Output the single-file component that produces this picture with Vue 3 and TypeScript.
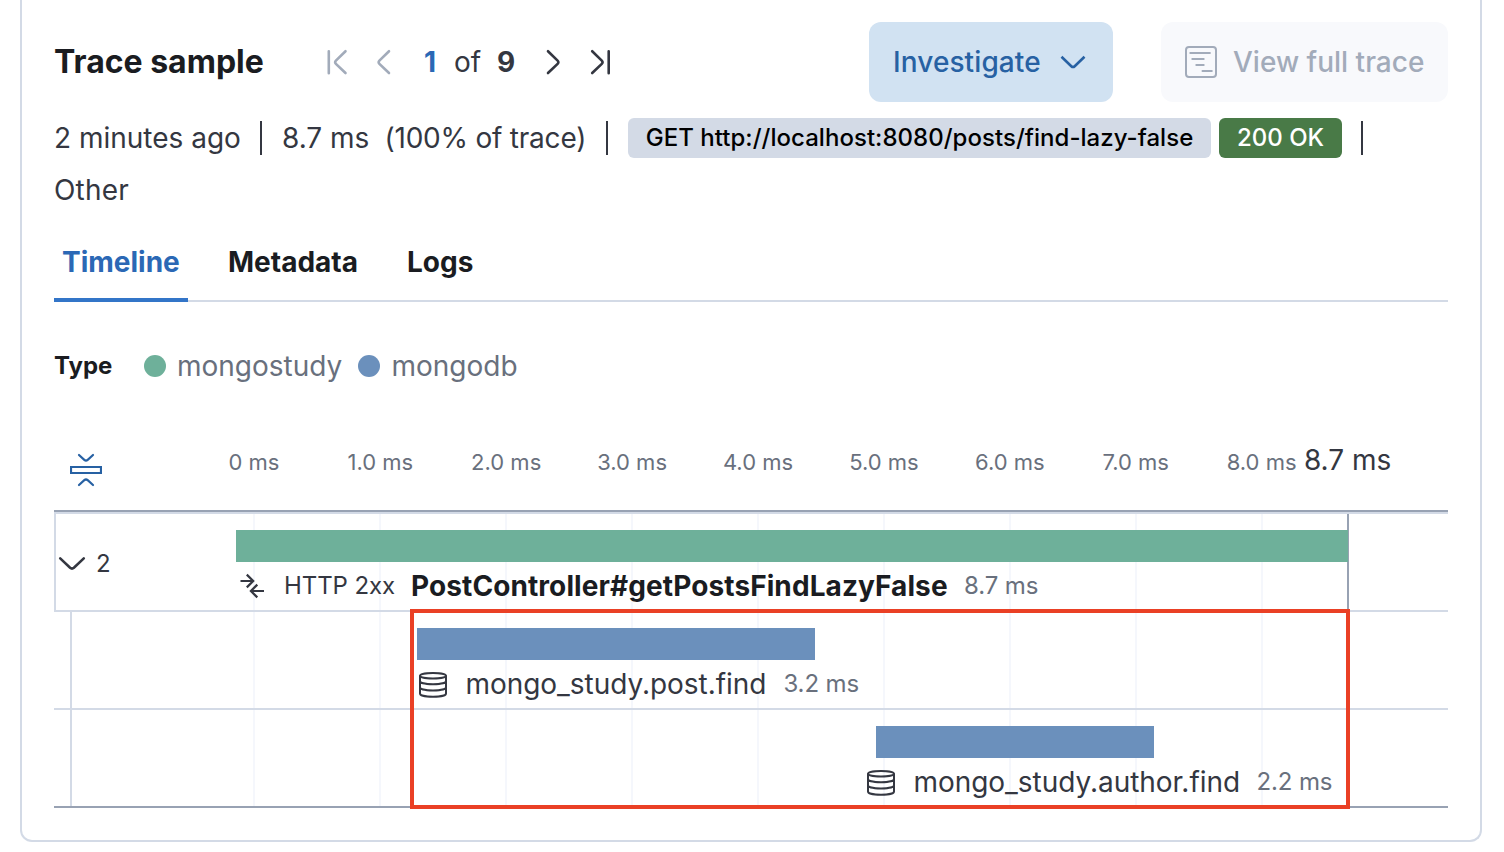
<script setup lang="ts">
interface Tick { label: string; x: number }
interface Span { id: number; name: string; duration: string; start: number; width: number; labelStart: number }

const ticks: Tick[] = Array.from({ length: 9 }, (_, i) => ({
  label: i === 0 ? '0 ms' : `${i}.0 ms`,
  x: i === 0 ? 200 : 200.4 + i * 125.9,
}))

const spans: Span[] = [
  { id: 1, name: 'mongo_study.post.find', duration: '3.2 ms', start: 363, width: 398, labelStart: 363 },
  { id: 2, name: 'mongo_study.author.find', duration: '2.2 ms', start: 822, width: 278, labelStart: 811 },
]
</script>

<template>
  <main class="panel">
    <header class="head">
      <h2 class="title">Trace sample</h2>
      <nav class="pager">
        <svg class="pg off" width="32" height="32" viewBox="0 0 32 32"><path d="M6.8 5.2v22M23.5 5.2l-9.6 9.4q-1.6 1.6 0 3.2l9.6 9.2" /></svg>
        <svg class="pg off second" width="32" height="32" viewBox="0 0 32 32"><path d="M20 5.2l-9.6 9.4q-1.6 1.6 0 3.2l9.6 9.2" /></svg>
        <b class="cur">1</b><span class="of">of</span><b class="total">9</b>
        <svg class="pg third" width="32" height="32" viewBox="0 0 32 32"><path d="M10 5.2l9.6 9.4q1.6 1.6 0 3.2l-9.6 9.2" /></svg>
        <svg class="pg fourth" width="32" height="32" viewBox="0 0 32 32"><path d="M7.2 5.2l9.6 9.4q1.6 1.6 0 3.2l-9.6 9.2M23.7 5.2v22" /></svg>
      </nav>
      <button class="btn primary">
        <span class="t-inv">Investigate</span>
        <svg width="32" height="32" viewBox="0 0 32 32"><path d="M4.5 10.8l9.8 9.4q1.7 1.6 3.4 0l9.8-9.4" /></svg>
      </button>
      <button class="btn disabled">
        <svg width="32" height="32" viewBox="0 0 32 32"><path d="M4 1h24a3 3 0 0 1 3 3v24a3 3 0 0 1-3 3H4a3 3 0 0 1-3-3V4a3 3 0 0 1 3-3zM5.3 7h19.6M7.3 13h11.4M11.3 19h7.4M17.5 25h9.3" /></svg>
        <span class="t-view">View full trace</span>
      </button>
    </header>

    <section class="summary">
      <div class="line">
        <span class="ago">2 minutes ago</span><i class="sep"></i>
        <span class="dur">8.7 ms</span><span class="pct">(100% of trace)</span><i class="sep"></i>
        <span class="badge url"><span>GET http://localhost:8080/posts/find-lazy-false</span></span>
        <span class="badge ok"><span>200 OK</span></span><i class="sep"></i>
      </div>
      <div class="line"><span class="other">Other</span></div>
    </section>

    <nav class="tabs">
      <a class="tab active">Timeline</a>
      <a class="tab meta">Metadata</a>
      <a class="tab logs">Logs</a>
    </nav>

    <div class="legend">
      <b class="type">Type</b>
      <i class="dot green"></i><span class="l1">mongostudy</span>
      <i class="dot blue"></i><span class="l2">mongodb</span>
    </div>

    <section class="waterfall">
      <div class="axis">
        <svg class="fold" width="32" height="36" viewBox="0 0 32 36"><path d="M9 3l5.3 4.8q1.7 1.4 3.4 0L23 3M9 33l5.3-4.8q1.7-1.4 3.4 0L23 33" stroke-linecap="round" /><path d="M1 15h30v6H1z" /></svg>
        <span v-for="t in ticks" :key="t.label" class="tick" :style="{ left: t.x + 'px' }">{{ t.label }}</span>
        <span class="tick end">8.7 ms</span>
      </div>
      <div class="chart">
        <i v-for="t in ticks" :key="t.label" class="grid" :style="{ left: Math.round(t.x) - 1 + 'px' }"></i>
        <i class="grid last"></i>
        <div class="row root">
          <div class="toggle">
            <svg width="32" height="32" viewBox="0 0 32 32"><path d="M4.2 10.4l9.9 9.4q1.9 1.6 3.8 0l9.9-9.4" stroke-linecap="round" /></svg>
            <span>2</span>
          </div>
          <div class="track">
            <div class="bar green"></div>
            <div class="label">
              <svg class="merge" width="32" height="32" viewBox="0 0 32 32"><path d="M4.5 11H17M10.8 4.6l6.4 6.4-6.4 6.4M28 21H15.5M21.3 14.6L14.9 21l6.4 6.4" /></svg>
              <span class="http">HTTP 2xx</span>
              <b class="post">PostController#getPostsFindLazyFalse</b>
              <span class="ms">8.7 ms</span>
            </div>
          </div>
        </div>
        <div v-for="s in spans" :key="s.id" class="row child">
          <div class="bar blue" :style="{ marginLeft: s.start + 'px', width: s.width + 'px' }"></div>
          <div class="label" :style="{ marginLeft: s.labelStart + 'px' }">
            <svg class="db" width="32" height="32" viewBox="0 0 32 32"><ellipse cx="16" cy="7.8" rx="13" ry="2.8" /><path d="M3 7.8v17.6c0 1.9 5 3.4 13 3.4s13-1.5 13-3.4V7.8M3 13c0 1.8 5 3.2 13 3.2s13-1.4 13-3.2M3 19.2c0 1.8 5 3.2 13 3.2s13-1.4 13-3.2" /></svg>
            <span class="name" :class="'n' + s.id">{{ s.name }}</span>
            <span class="ms">{{ s.duration }}</span>
          </div>
        </div>
        <div class="highlight"></div>
      </div>
    </section>
  </main>
</template>

<style>
html, body { background: #fff; overflow: hidden; }
</style>

<style scoped>
.panel {
  box-sizing: border-box; width: 1462px; height: 842px; margin-left: 20px; padding: 22px 32px 0;
  border: 2px solid #d3dae6; border-top: 0; border-radius: 0 0 12px 12px; background: #fff;
  font-family: Inter, "Liberation Sans", sans-serif; font-size: 28px; color: #343741;
}
span, b, a { white-space: nowrap; }
svg { display: block; flex: none; fill: none; stroke: currentColor; stroke-width: 2.6; }
.head { display: flex; align-items: center; height: 80px; }
.title { width: 268px; margin: 0; padding-bottom: 2px; font-size: 32px; font-weight: 700; color: #1a1c21; white-space: nowrap; }
.pager { display: flex; align-items: center; flex: 1; }
.pg { stroke-linecap: round; }
.off { color: #a2abba; }
.second { margin-left: 15px; }
.cur { margin-left: 23px; width: 30px; color: #2b68b5; }
.of { width: 43px; }
.total { width: 41px; }
.fourth { margin-left: 15px; }
.btn {
  box-sizing: border-box; display: flex; align-items: center; height: 80px; padding: 0 24px; border: 0;
  border-radius: 12px; font: 500 28px Inter, sans-serif;
}
.primary { width: 244px; gap: 16px; background: #d1e2f2; color: #2761a3; }
.t-inv { width: 148px; text-align: left; letter-spacing: 0.1px; }
.disabled { width: 287px; margin-left: 48px; gap: 16px; background: #f8f9fc; color: #a2abba; }
.disabled svg { stroke-width: 2; stroke-linecap: round; }
.line { display: flex; align-items: center; height: 52px; }
.summary { margin-top: 10px; }
.ago { width: 206px; }
.sep { width: 2px; height: 34px; background: #343741; }
.dur { margin-left: 20px; width: 102.5px; }
.pct { width: 221.5px; letter-spacing: -0.22px; }
.other { letter-spacing: 0.2px; }
.badge {
  box-sizing: border-box; height: 40px; padding-bottom: 2px; border-radius: 6px; display: flex; align-items: center;
  justify-content: center; font-size: 24px; font-weight: 500;
}
.url { width: 583px; margin-left: 20px; background: #d3dae6; color: #000; letter-spacing: 0.03px; }
.ok { width: 123px; margin: 0 19px 0 8px; background: #497a47; color: #fff; }
.tabs { box-sizing: border-box; display: flex; gap: 32px; height: 80px; margin-top: 6px; border-bottom: 2px solid #d3dae6; }
.tab { box-sizing: border-box; height: 80px; padding: 0 8px; line-height: 80px; font-weight: 700; color: #1a1c21; }
.active { width: 134px; color: #2b68b5; border-bottom: 4px solid #3375c8; }
.meta { width: 147px; }
.legend { display: flex; align-items: center; height: 48px; margin-top: 40px; color: #69707d; }
.type { width: 90px; padding-bottom: 2px; font-size: 24px; color: #1a1c21; }
.dot { width: 22px; height: 22px; border-radius: 50%; }
.l1 { margin-left: 11px; width: 181px; }
.l2 { margin-left: 11.5px; }
.green { background: #6eb09a; }
.blue { background: #6b90bc; }
.axis { position: relative; height: 120px; }
.fold { position: absolute; left: 16px; top: 62px; color: #2761a3; stroke-width: 2; }
.fold path { stroke-width: 2.2; }
.tick { position: absolute; top: 56px; line-height: 32px; transform: translateX(-50%); font-size: 22px; color: #69707d; }
.end { left: 1293.6px; top: 54px; font-size: 28px; color: #343741; }
.chart { position: relative; height: 298px; box-sizing: border-box; border-top: 2px solid #98a2b3; border-bottom: 2px solid #98a2b3; }
.grid { position: absolute; top: 2px; bottom: 0; width: 2px; background: #f5f7fc; }
.last { left: 1293px; background: #98a2b3; }
.row { position: relative; box-sizing: border-box; height: 98px; border-top: 2px solid #d3dae6; padding-top: 16px; }
.root { display: flex; border-left: 2px solid #d3dae6; height: 98px; }
.child::before { content: ""; position: absolute; left: 16px; top: 0; height: 96px; width: 2px; background: #d3dae6; }
.toggle { display: flex; align-items: center; width: 180px; height: 68px; font-size: 24px; gap: 8px; }
.toggle span { padding-bottom: 2px; }
.bar { height: 32px; }
.root .bar { width: 1112px; }
.label { display: flex; align-items: center; height: 48px; }
.merge { stroke-width: 2.2; }
.http { margin-left: 16px; width: 127px; padding-bottom: 2px; font-size: 24px; letter-spacing: -0.1px; }
.post { width: 553px; color: #1a1c21; letter-spacing: 0.09px; }
.ms { padding-bottom: 2px; font-size: 24px; letter-spacing: -0.1px; color: #69707d; }
.db { stroke-width: 2; }
.name { margin-left: 16.4px; letter-spacing: -0.03px; }
.n1 { width: 318px; }
.n2 { width: 343px; }
.highlight { position: absolute; left: 356px; top: 97px; box-sizing: border-box; width: 940px; height: 200px; border: 4px solid #ea4025; }
</style>
